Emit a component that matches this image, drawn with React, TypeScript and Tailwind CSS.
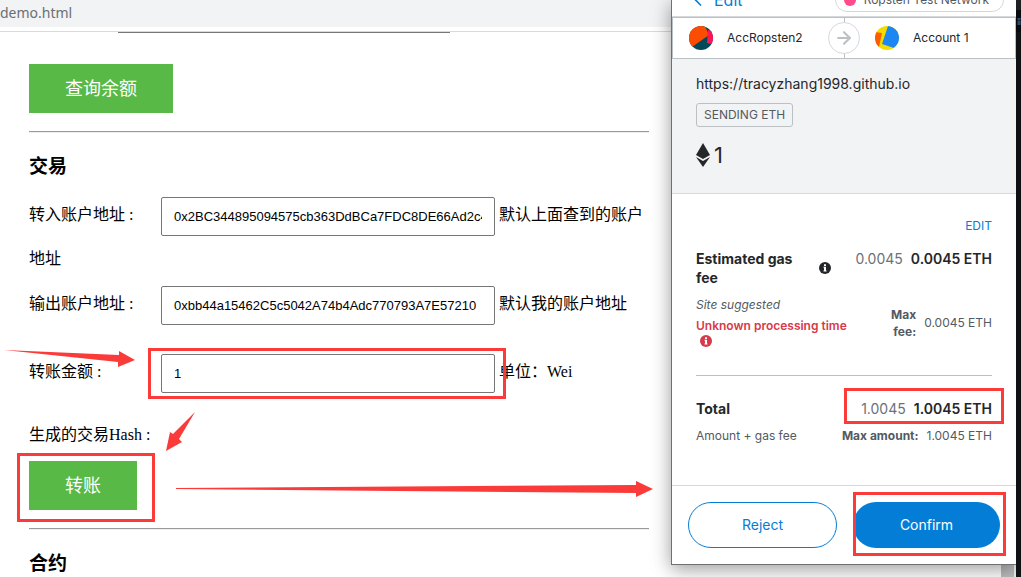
import type { ReactNode } from 'react';
import { ArrowRight, ChevronLeft } from 'lucide-react';

type FieldProps = {
  id: string;
  label: string;
  value: string;
  hint: ReactNode;
  marked?: boolean;
};

function Marker({ className }: { className: string }) {
  return <span className={`pointer-events-none absolute border-3 border-[#fb3a3a] ${className}`} />;
}

function Field({ id, label, value, hint, marked }: FieldProps) {
  return (
    <div className="mb-px leading-[44px]">
      <label htmlFor={id} className="inline-block w-[132px]">{label}</label>
      <span className="relative inline-block align-middle leading-none">
        <input
          id={id}
          type="text"
          defaultValue={value}
          className="h-[39px] w-[334px] rounded-[2px] border border-[#767676] bg-white px-3 font-['Liberation_Sans',Arial,sans-serif] text-[13px] text-black"
        />
        {marked && <Marker className="-top-1.5 -right-[11px] -bottom-1.5 -left-[13px]" />}
      </span>{' '}
      {hint}
    </div>
  );
}

function GreenButton({ children }: { children: ReactNode }) {
  return (
    <button className="block h-[49px] bg-[#58b947] px-9 font-['Liberation_Sans','Noto_Sans_CJK_SC',sans-serif] text-lg text-white">
      {children}
    </button>
  );
}

function Rule() {
  return <hr className="h-[2px] border-t border-b border-t-[#9a9a9a] border-b-[#eeeeee]" />;
}

function InfoIcon({ className }: { className: string }) {
  return (
    <svg viewBox="0 0 12 12" className={`size-3 shrink-0 ${className}`}>
      <circle cx="6" cy="6" r="6" fill="currentColor" />
      <path d="M5 2.3h2v1.6H5zM4.6 4.8H7v3.6h.6v1.2H4.5V8.4H5V6h-.4z" fill="#fff" />
    </svg>
  );
}

function DemoPage() {
  return (
    <div className="min-w-0 flex-1 bg-white font-['Liberation_Serif','Noto_Sans_CJK_SC',serif] text-base text-black">
      <div className="h-[27px] bg-[#f1f3f4] font-['Noto_Sans',sans-serif] text-sm leading-[26px] text-[#6b6f73]">
        demo.html
      </div>
      <div className="h-[5px] border-b border-[#d9dadb]" />
      <div className="pr-[22px] pl-[29px]">
        <div className="ml-[89px] h-px w-[332px] bg-[#767676]" />
        <div className="pt-[31px] pb-[18px]">
          <GreenButton>查询余额</GreenButton>
        </div>
        <Rule />
        <h3 className="pt-5 pb-3 text-[19px] leading-7 font-bold">交易</h3>
        <Field id="to" label="转入账户地址 :" value="0x2BC344895094575cb363DdBCa7FDC8DE66Ad2c41" hint="默认上面查到的账户地址" />
        <Field id="from" label="输出账户地址 :" value="0xbb44a15462C5c5042A74b4Adc770793A7E57210" hint="默认我的账户地址" />
        <div className="pt-[23px] pb-[22px]">
          <Field id="amount" label="转账金额 :" value="1" hint="单位：Wei" marked />
        </div>
        <p className="pb-2 leading-9">生成的交易Hash :</p>
        <div className="relative mb-[18px] w-fit">
          <GreenButton>转账</GreenButton>
          <Marker className="-top-2 -right-[18px] -bottom-3 -left-3" />
        </div>
        <Rule />
        <h3 className="pt-5 text-[19px] leading-7 font-bold">合约</h3>
      </div>
    </div>
  );
}

function WalletPopup() {
  return (
    <section className="relative z-10 flex flex-col border-b border-l border-[#6e7072] bg-white font-[Inter,sans-serif] text-[#24272a] shadow-[0_4px_18px_rgba(0,0,0,0.4)]">
      <header className="-mt-[17px] flex h-[34px] items-center justify-between border-b border-[#d6d9dc] pr-3 pl-4">
        <button className="flex items-center gap-1.5 text-base text-[#037dd6]">
          <ChevronLeft className="size-5" />
          Edit
        </button>
        <div className="flex h-6 items-center gap-2 rounded-full border border-[#d6d9dc] px-2 text-xs text-[#535a61]">
          <span className="size-3 rounded-full bg-[#ff4a8d]" />
          <span className="pr-1.5">Ropsten Test Network</span>
        </div>
      </header>

      <div className="relative flex h-[42px] items-center border border-[#bbc0c5] text-xs">
        <div className="flex w-1/2 items-center gap-3.5 pl-4">
          <svg viewBox="0 0 24 24" className="size-6">
            <clipPath id="from-avatar"><circle cx="12" cy="12" r="12" /></clipPath>
            <g clipPath="url(#from-avatar)">
              <path d="M0 0h24v24H0z" fill="#03495a" />
              <path d="M0 0h16l4 9L3 21H0z" fill="#fc4c02" />
              <path d="M19 4l7 2v13l-8-2z" fill="#ff1556" />
            </g>
          </svg>
          <span>AccRopsten2</span>
        </div>
        <div className="flex w-1/2 items-center gap-3.5 pl-[31px]">
          <svg viewBox="0 0 24 24" className="size-6">
            <clipPath id="to-avatar"><circle cx="12" cy="12" r="12" /></clipPath>
            <g clipPath="url(#to-avatar)">
              <path d="M0 0h24v24H0z" fill="#f5dc00" />
              <path d="M0 6l7 1-3 14-6-2z" fill="#ff5b00" />
              <path d="M13 0h13v14l-7 8-12-4z" fill="#1c86f2" />
            </g>
          </svg>
          <span>Account 1</span>
        </div>
        <div className="absolute inset-y-0 left-1/2 w-px bg-[#bbc0c5]" />
        <div className="absolute top-1 left-1/2 flex size-8 -translate-x-1/2 items-center justify-center rounded-full border border-[#d6d9dc] bg-white">
          <ArrowRight className="size-5 text-[#bbc0c5]" strokeWidth={2.5} />
        </div>
      </div>

      <div className="flex flex-col items-start border-b border-[#d6d9dc] bg-[#f2f3f4] px-6 pt-[15px] pb-[22px]">
        <span className="text-sm leading-5">https://tracyzhang1998.github.io</span>
        <span className="mt-[9px] h-6 rounded-[3px] border border-[#bbc0c5] px-[7px] text-xs leading-[22px] text-[#535a61]">SENDING ETH</span>
        <div className="mt-3 flex items-center gap-1 text-[22px] leading-8">
          <svg viewBox="0 0 14 24" className="h-6 w-3.5">
            <path d="M7 0 14 12 7 16 0 12z" fill="#24272a" />
            <path d="M0 14l7 4 7-4-7 10z" fill="#24272a" />
          </svg>
          <span>1</span>
        </div>
      </div>

      <div className="px-6 pt-[22px] pb-10 text-xs">
        <div className="flex justify-end">
          <button className="leading-5 text-[#037dd6]">EDIT</button>
        </div>
        <div className="mt-[13px] flex justify-between text-sm">
          <div className="flex w-[135px] items-center justify-between">
            <span className="w-[100px] leading-[19px] font-bold">Estimated gas fee</span>
            <InfoIcon className="text-[#24272a]" />
          </div>
          <div className="leading-5">
            <span className="text-[#6a7178]">0.0045</span>
            <strong className="ml-2 font-semibold">0.0045 ETH</strong>
          </div>
        </div>
        <div className="mt-2 flex items-center justify-between text-[#535a61]">
          <div>
            <p className="leading-5 italic">Site suggested</p>
            <p className="pt-0.5 leading-[18px] font-semibold text-[#d73a49]">Unknown processing time</p>
            <InfoIcon className="ml-1 text-[#d73a49]" />
          </div>
          <div className="flex items-center gap-2 pt-1">
            <strong className="w-9 text-right leading-[17px]">Max fee:</strong>
            <span>0.0045 ETH</span>
          </div>
        </div>
        <div className="mt-7 border-t border-[#bbc0c5]" />
        <div className="mt-[23px] flex justify-between text-sm leading-5">
          <strong>Total</strong>
          <div className="relative">
            <span className="text-[#6a7178]">1.0045</span>
            <strong className="ml-2 font-semibold">1.0045 ETH</strong>
            <Marker className="-top-[11px] -right-3 -bottom-[5px] -left-[17px]" />
          </div>
        </div>
        <div className="mt-2 flex justify-between leading-[18px] text-[#535a61]">
          <span>Amount + gas fee</span>
          <div>
            <strong>Max amount:</strong>
            <span className="ml-2">1.0045 ETH</span>
          </div>
        </div>
      </div>

      <footer className="flex gap-4 border-t border-[#d6d9dc] p-4 text-sm">
        <button className="h-[46px] flex-1 rounded-full border border-[#037dd6] text-[#037dd6]">Reject</button>
        <div className="relative flex flex-1">
          <button className="h-[46px] flex-1 rounded-full bg-[#037dd6] text-white">Confirm</button>
          <Marker className="-top-2.5 -right-1.5 -bottom-2 left-0" />
        </div>
      </footer>
    </section>
  );
}

export default function App() {
  return (
    <div className="relative flex h-screen overflow-hidden bg-white">
      <DemoPage />
      <div className="flex w-[345px] flex-col">
        <WalletPopup />
        <div className="flex flex-1 justify-end bg-white">
          <div className="flex w-[15px] bg-[#f1f1f1] pr-0.5">
            <div className="flex-1 bg-[#bcbcbc]" />
          </div>
        </div>
      </div>
      <div className="w-[5px] bg-[#121517]">
        <div className="h-2.5 bg-[#202427]" />
        <svg viewBox="0 0 5 22" className="h-[22px] w-[5px] bg-[#0b0d0f]">
          <path d="M1 9h4M1 12h4M1 14h4M3 8v7" stroke="#3f6f9f" fill="none" />
        </svg>
      </div>

      {/* arrows that lead from the form to the wallet */}
      <svg viewBox="0 0 660 577" className="pointer-events-none absolute top-0 left-0 h-[577px] w-[660px] fill-[#fb3a3a]">
        <path d="M4 350 119 355V351L135 360 118 367V362z" />
        <path d="M195 412 179 439 182 442 166 451 170 432 173 434z" />
        <path d="M176 488 636 485V481L653 489 636 497V493L176 489z" />
      </svg>
    </div>
  );
}
